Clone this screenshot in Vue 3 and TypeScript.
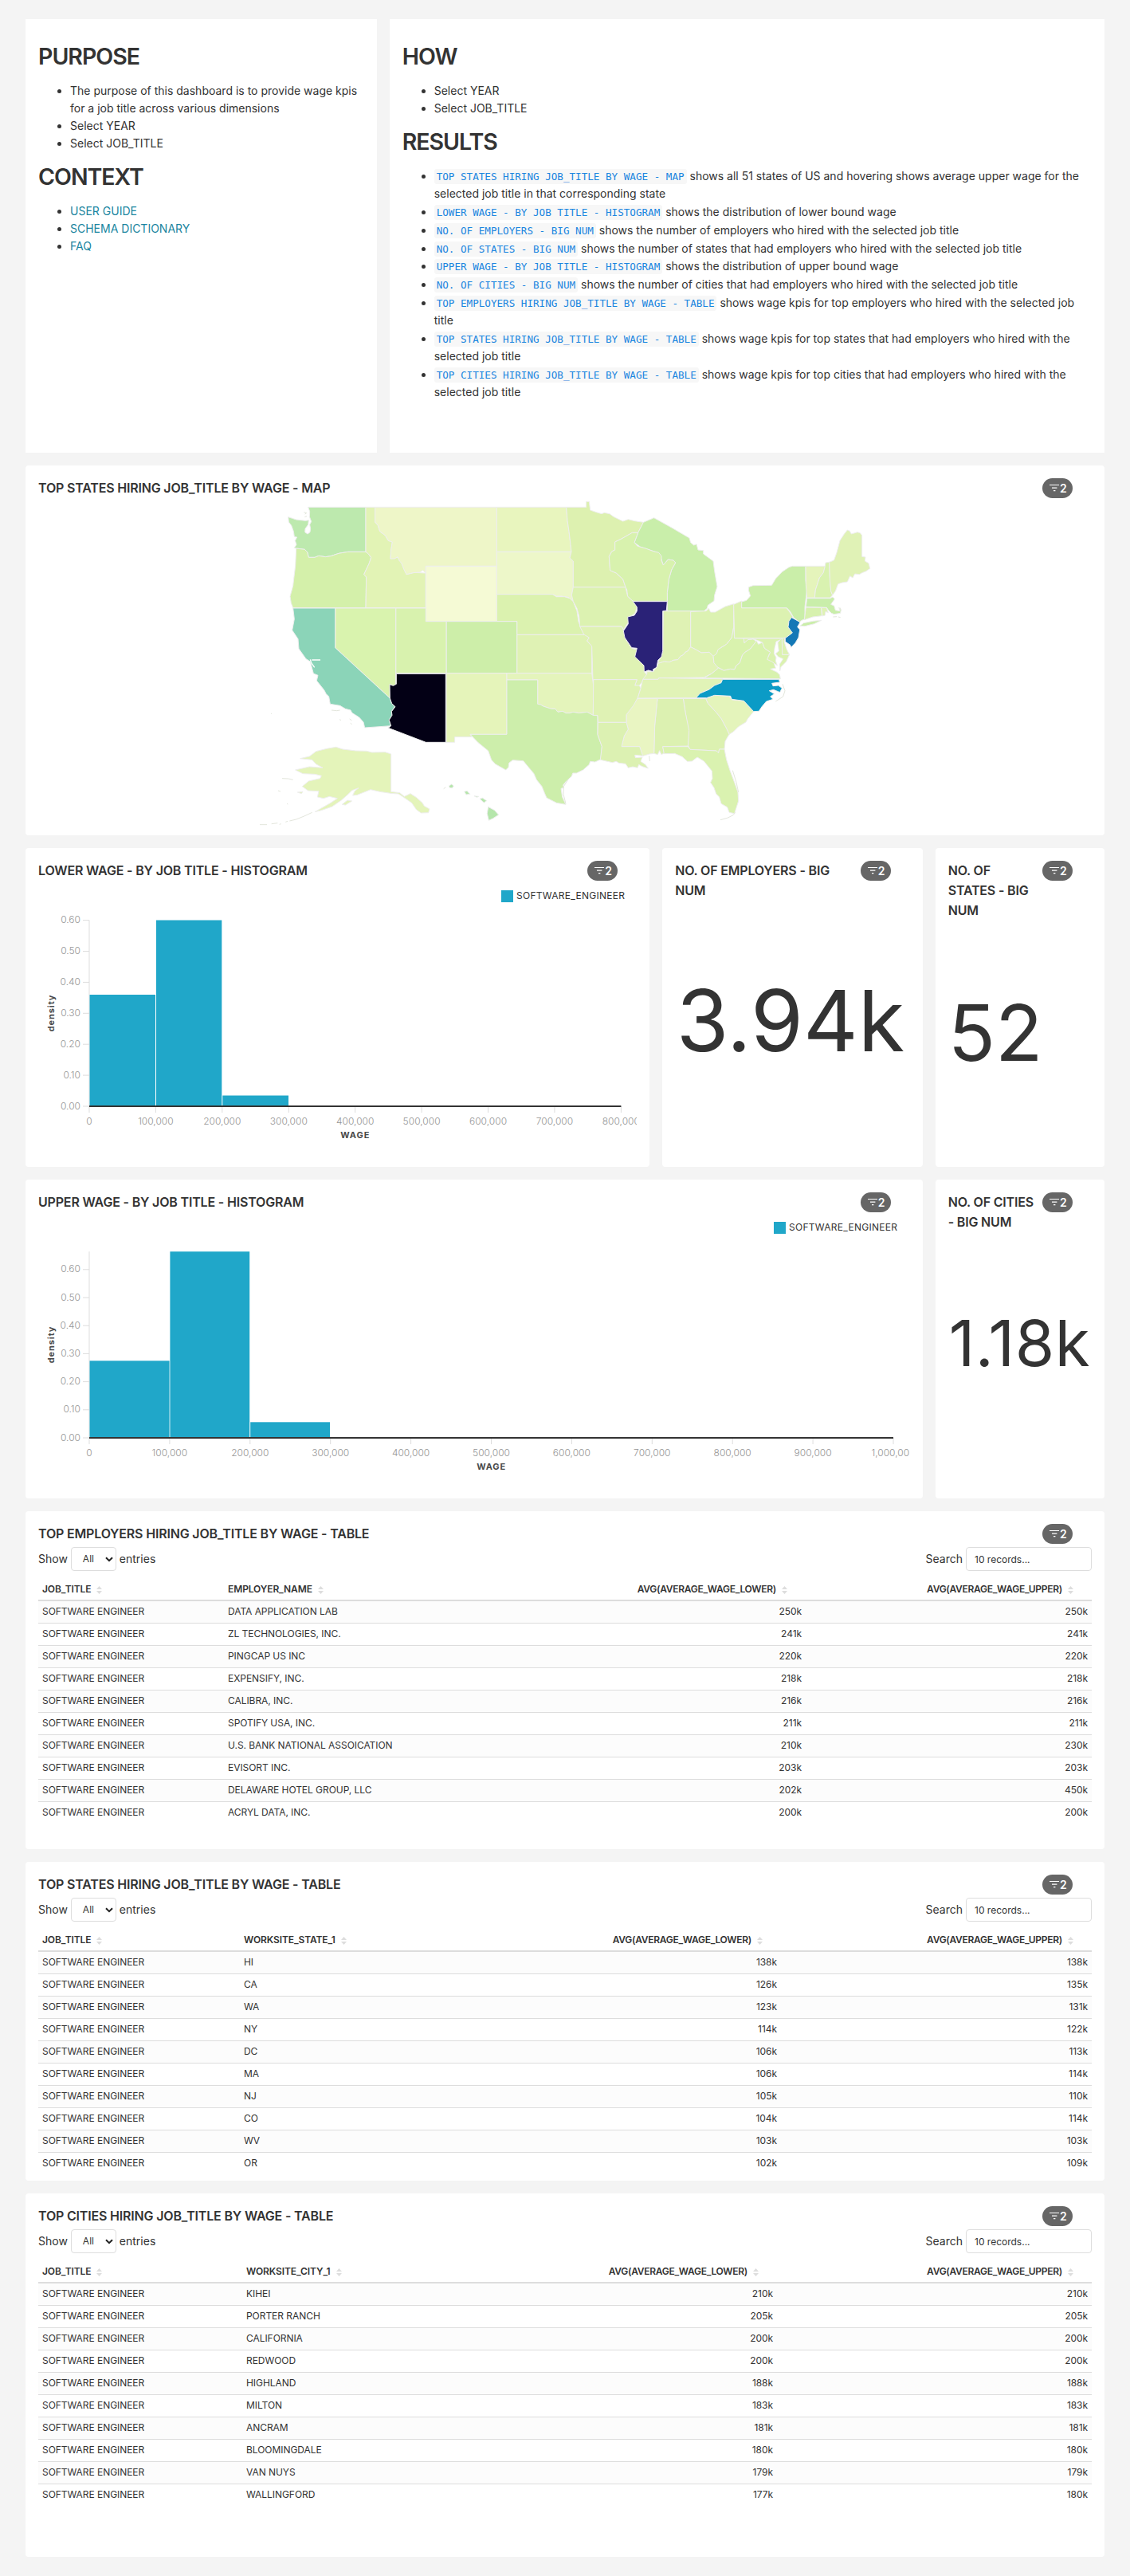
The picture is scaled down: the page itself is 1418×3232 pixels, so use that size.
<script setup lang="ts">
interface Shape { id: string; fill: string; d: string }
interface Bar { from: number; to: number; top: number }
interface Tick { at: number; label: string }
interface Histogram { id: string; width: number; legendX: number; center: number; end: number; top: number; bars: Bar[]; xTicks: Tick[]; yTicks: Tick[] }
interface WageTable { title: string; height: number; widths: number[]; columns: string[]; rows: string[][] }

const BASE = 276

const results: [string, string][] = [
  ['TOP STATES HIRING JOB_TITLE BY WAGE - MAP', 'shows all 51 states of US and hovering shows average upper wage for the selected job title in that corresponding state'],
  ['LOWER WAGE - BY JOB TITLE - HISTOGRAM', 'shows the distribution of lower bound wage'],
  ['NO. OF EMPLOYERS - BIG NUM', 'shows the number of employers who hired with the selected job title'],
  ['NO. OF STATES - BIG NUM', 'shows the number of states that had employers who hired with the selected job title'],
  ['UPPER WAGE - BY JOB TITLE - HISTOGRAM', 'shows the distribution of upper bound wage'],
  ['NO. OF CITIES - BIG NUM', 'shows the number of cities that had employers who hired with the selected job title'],
  ['TOP EMPLOYERS HIRING JOB_TITLE BY WAGE - TABLE', 'shows wage kpis for top employers who hired with the selected job title'],
  ['TOP STATES HIRING JOB_TITLE BY WAGE - TABLE', 'shows wage kpis for top states that had employers who hired with the selected job title'],
  ['TOP CITIES HIRING JOB_TITLE BY WAGE - TABLE', 'shows wage kpis for top cities that had employers who hired with the selected job title'],
]

const ticks = (count: number, step: number): Tick[] =>
  Array.from({ length: count + 1 }, (_, i) => ({ at: 64 + i * step, label: (i * 100000).toLocaleString('en-US') }))
const levels = (step: number): Tick[] =>
  Array.from({ length: 7 }, (_, i) => ({ at: BASE - i * step, label: (i / 10).toFixed(2) }))

const lower: Histogram = {
  id: 'lower', width: 751, legendX: 581, center: 397.8, end: 731.4, top: 42.5,
  bars: [{ from: 64.5, to: 147, top: 136 }, { from: 148, to: 230.3, top: 42.5 }, { from: 231.3, to: 314, top: 262.5 }],
  xTicks: ticks(8, 83.42), yTicks: levels(38.9),
}
const upper: Histogram = {
  id: 'upper', width: 1093, legendX: 923, center: 568.6, end: 1073, top: 42.3,
  bars: [{ from: 64.5, to: 164.6, top: 179.3 }, { from: 165.4, to: 265.2, top: 42.3 }, { from: 266.2, to: 366, top: 256.3 }],
  xTicks: ticks(10, 100.9), yTicks: levels(35.2),
}

const job = 'SOFTWARE ENGINEER'
const columnsFor = (name: string): string[] => ['JOB_TITLE', name, 'AVG(AVERAGE_WAGE_LOWER)', 'AVG(AVERAGE_WAGE_UPPER)']
const tables: WageTable[] = [
  {
    title: 'TOP EMPLOYERS HIRING JOB_TITLE BY WAGE - TABLE', height: 424, widths: [233, 367, 363, 359], columns: columnsFor('EMPLOYER_NAME'),
    rows: [
      [job, 'DATA APPLICATION LAB', '250k', '250k'], [job, 'ZL TECHNOLOGIES, INC.', '241k', '241k'],
      [job, 'PINGCAP US INC', '220k', '220k'], [job, 'EXPENSIFY, INC.', '218k', '218k'],
      [job, 'CALIBRA, INC.', '216k', '216k'], [job, 'SPOTIFY USA, INC.', '211k', '211k'],
      [job, 'U.S. BANK NATIONAL ASSOICATION', '210k', '230k'], [job, 'EVISORT INC.', '203k', '203k'],
      [job, 'DELAWARE HOTEL GROUP, LLC', '202k', '450k'], [job, 'ACRYL DATA, INC.', '200k', '200k'],
    ],
  },
  {
    title: 'TOP STATES HIRING JOB_TITLE BY WAGE - TABLE', height: 400, widths: [253, 287, 392, 390], columns: columnsFor('WORKSITE_STATE_1'),
    rows: [
      [job, 'HI', '138k', '138k'], [job, 'CA', '126k', '135k'], [job, 'WA', '123k', '131k'], [job, 'NY', '114k', '122k'],
      [job, 'DC', '106k', '113k'], [job, 'MA', '106k', '114k'], [job, 'NJ', '105k', '110k'], [job, 'CO', '104k', '114k'],
      [job, 'WV', '103k', '103k'], [job, 'OR', '102k', '109k'],
    ],
  },
  {
    title: 'TOP CITIES HIRING JOB_TITLE BY WAGE - TABLE', height: 456, widths: [256, 274, 397, 395], columns: columnsFor('WORKSITE_CITY_1'),
    rows: [
      [job, 'KIHEI', '210k', '210k'], [job, 'PORTER RANCH', '205k', '205k'], [job, 'CALIFORNIA', '200k', '200k'],
      [job, 'REDWOOD', '200k', '200k'], [job, 'HIGHLAND', '188k', '188k'], [job, 'MILTON', '183k', '183k'],
      [job, 'ANCRAM', '181k', '181k'], [job, 'BLOOMINGDALE', '180k', '180k'], [job, 'VAN NUYS', '179k', '179k'],
      [job, 'WALLINGFORD', '177k', '180k'],
    ],
  },
]

const states: Shape[] = [
  { id: 'WA', fill: '#bde9ae', d: 'M185,146L200,151 215,156 250,160 262,158 260,175 249,190 248,203 258,210 267,203 269,190 266,175 272,163 265,145 266,125 260,109 477,109 477,277 410,277 375,283 345,293 325,296 300,292 285,298 262,298 257,278 247,268 215,264 208,262 216,250 211,235 218,222 208,220 205,200 197,178 187,165Z' },
  { id: 'OR', fill: '#d4f0aa', d: 'M215,264L247,268 257,278 262,298 285,298 300,292 325,296 345,293 375,283 410,277 477,277 487,285 497,298 490,320 470,362 479,372 477,488 203,488 196,470 192,445 203,405 207,370 212,330Z' },
  { id: 'ID', fill: '#e2f3b5', d: 'M477,109L512,109 512,165 523,178 530,200 550,215 562,235 577,240 572,275 570,303 597,298 612,320 630,362 660,355 703,357 703,488 477,488 479,372 470,362 490,320 497,298 487,285 477,277Z' },
  { id: 'MT', fill: '#eef6c8', d: 'M512,109L970,109 970,331 703,331 703,357 692,347 680,354 655,356 630,362 620,342 612,320 604,312 597,296 585,303 570,303 572,270 577,240 562,235 550,215 530,200 523,178 512,165Z' },
  { id: 'WY', fill: '#f5fad5', d: 'M703,331H970V539H703Z' },
  { id: 'ND', fill: '#e8f5be', d: 'M970,109L1232,109 1236,160 1242,200 1248,250 1251,277 970,277Z' },
  { id: 'SD', fill: '#edf7c9', d: 'M970,277L1251,277 1245,300 1258,312 1258,410 1252,440 1258,464 1240,448 1215,444 1195,444 1180,437 970,437Z' },
  { id: 'NE', fill: '#dbf2af', d: 'M970,437L1180,437 1195,446 1225,446 1245,452 1258,464 1272,500 1278,540 1290,570 1302,589 1046,589 1046,539 970,539Z' },
  { id: 'KS', fill: '#dff2b4', d: 'M1046,589L1304,589 1318,600 1310,612 1328,632 1328,734 1046,734Z' },
  { id: 'CO', fill: '#cdeea9', d: 'M780,539H1046V734H780Z' },
  { id: 'UT', fill: '#d8f2ae', d: 'M590,489H703V539H780V734H590Z' },
  { id: 'NV', fill: '#d9f3ae', d: 'M362,489L590,489 590,778 580,781 568,776 568,828 362,638Z' },
  { id: 'NM', fill: '#e5f4ba', d: 'M780,734H1008V964H870L876,974H812V994H780Z' },
  { id: 'OK', fill: '#e4f4bb', d: 'M1008,734L1328,734 1334,780 1333,892 1310,880 1280,884 1257,880 1245,884 1230,884 1218,877 1200,880 1190,868 1175,868 1145,858 1135,852 1124,850 1124,759 1008,759Z' },
  { id: 'TX', fill: '#cdeeab', d: 'M1008,759L1124,759 1124,850 1135,852 1145,858 1175,868 1190,868 1200,880 1218,877 1230,884 1245,884 1257,880 1280,884 1310,880 1333,892 1350,893 1350,965 1366,1010 1362,1058 1340,1068 1322,1066 1318,1078 1295,1098 1270,1110 1256,1110 1252,1122 1232,1140 1220,1155 1222,1165 1212,1168 1217,1200 1230,1228 1195,1222 1158,1203 1150,1185 1140,1160 1120,1135 1110,1112 1090,1088 1070,1064 1030,1061 1016,1072 1014,1088 1004,1098 965,1076 950,1060 938,1026 900,995 870,964 1008,964Z' },
  { id: 'MN', fill: '#ddf1b0', d: 'M1232,109L1307,109 1307,88 1318,88 1322,120 1345,128 1365,134 1375,130 1395,134 1410,145 1420,150 1445,162 1465,155 1490,161 1522,166 1502,205 1480,205 1440,228 1415,240 1415,270 1403,276 1393,295 1397,347 1420,357 1445,380 1455,410 1258,410 1258,312 1245,300 1251,277 1248,250 1242,200 1236,160Z' },
  { id: 'MI', fill: '#c9eeaa', d: 'M1522,166L1562,149 1630,187 1695,225 1700,242 1712,252 1722,248 1728,270 1748,272 1748,285 1785,312 1790,350 1800,408 1790,440 1788,462 1765,478 1762,490 1750,500 1612,500 1612,430 1618,380 1628,345 1643,318 1635,309 1615,306 1597,327 1590,305 1580,282 1560,275 1510,258 1488,242 1502,205Z' },
  { id: 'WI', fill: '#d8f2ae', d: 'M1415,240L1440,228 1480,205 1502,205 1488,242 1500,256 1530,264 1560,275 1580,280 1590,293 1590,310 1597,327 1605,318 1615,306 1635,309 1643,318 1628,345 1618,380 1612,430 1612,463 1483,463 1463,445 1460,420 1455,410 1445,380 1420,357 1397,347 1393,295 1403,276 1415,270Z' },
  { id: 'IA', fill: '#dcf2b1', d: 'M1258,410L1455,410 1463,445 1483,463 1498,485 1490,510 1465,525 1467,540 1447,570 1440,558 1283,558 1280,520 1272,490 1258,464 1252,440Z' },
  { id: 'MO', fill: '#dff2b4', d: 'M1283,558L1440,558 1449,575 1452,600 1478,640 1498,645 1492,670 1525,705 1527,730 1535,740 1515,770 1505,782 1490,780 1498,758 1332,758 1328,632 1310,612 1318,600 1298,588Z' },
  { id: 'IN', fill: '#dff2b4', d: 'M1597,500L1700,500 1700,635 1690,650 1680,655 1672,665 1662,670 1652,683 1635,685 1620,692 1600,690 1578,697 1578,690 1590,670 1595,650Z' },
  { id: 'OH', fill: '#dcf2b2', d: 'M1700,502L1758,500 1768,490 1775,504 1792,504 1830,483 1862,473 1862,560 1855,600 1835,625 1810,640 1798,665 1785,670 1770,655 1740,657 1720,645 1700,635Z' },
  { id: 'KY', fill: '#e1f3b7', d: 'M1700,635L1720,645 1740,657 1770,655 1785,670 1788,695 1805,714 1780,735 1750,750 1580,752 1578,757 1520,757 1535,738 1535,728 1558,728 1572,712 1578,697 1600,690 1620,692 1635,685 1652,683 1662,670 1672,665 1680,655 1690,650Z' },
  { id: 'TN', fill: '#e1f3b7', d: 'M1520,757L1578,757 1580,752 1820,755 1815,770 1790,780 1770,795 1745,805 1722,827 1500,828 1512,790Z' },
  { id: 'WV', fill: '#d9f2ae', d: 'M1862,560L1865,602 1900,603 1902,620 1915,608 1935,605 1948,615 1925,642 1905,655 1895,665 1885,695 1872,705 1865,720 1850,718 1825,724 1800,710 1788,695 1785,670 1798,660 1803,645 1835,625 1855,600Z' },
  { id: 'VA', fill: '#d8f2ae', d: 'M1750,752L1780,735 1805,714 1825,724 1850,718 1865,720 1872,705 1885,695 1895,665 1905,655 1925,642 1948,612 1955,625 1970,618 1978,640 2000,655 1992,670 2012,692 2020,715 2000,718 2025,730 2035,740 2038,755Z' },
  { id: 'PA', fill: '#dcf2b1', d: 'M1862,475L1892,462 1892,488 2060,488 2070,500 2085,522 2068,545 2070,565 2083,580 2075,597 2050,602 1865,602Z' },
  { id: 'NY', fill: '#caeea9', d: 'M1892,465L1910,460 1925,443 1918,422 1918,410 1935,404 2005,403 2020,378 2045,352 2070,335 2083,331 2133,331 2133,385 2138,420 2130,485 2130,530 2118,535 2110,542 2088,525 2075,502 2062,488 1892,488Z M2112,556L2125,545 2160,538 2192,535 2165,548 2130,557Z' },
  { id: 'VT', fill: '#e5f4bb', d: 'M2133,331L2206,331 2200,355 2185,375 2170,420 2167,450 2138,450 2134,400Z' },
  { id: 'NH', fill: '#d9f2b0', d: 'M2206,331L2208,318 2222,316 2224,370 2228,425 2234,440 2225,450 2167,450 2170,420 2185,375 2200,355Z' },
  { id: 'ME', fill: '#e0f2b6', d: 'M2222,316L2232,312 2240,308 2250,280 2262,235 2278,210 2290,195 2298,198 2305,210 2328,203 2338,206 2345,215 2345,295 2358,297 2356,312 2370,320 2375,340 2360,350 2345,356 2335,362 2318,360 2310,375 2300,368 2290,390 2270,393 2255,398 2245,425 2234,440 2228,425 2224,380Z' },
  { id: 'MA', fill: '#c9eeaa', d: 'M2138,452L2225,452 2235,447 2242,455 2228,475 2240,480 2245,497 2262,500 2258,487 2266,495 2264,508 2240,512 2230,508 2218,496 2212,487 2134,484Z' },
  { id: 'CT', fill: '#d7f1ae', d: 'M2134,486L2192,487 2194,518 2160,522 2128,533Z' },
  { id: 'RI', fill: '#dff2b5', d: 'M2192,487L2212,488 2218,506 2208,502 2206,516 2196,519Z' },
  { id: 'MD', fill: '#dbf2b0', d: 'M1900,603L2044,603 2045,664 2072,664 2060,690 2040,710 2036,725 2035,700 2048,680 2030,672 2020,660 2032,650 2028,618 2038,608 2022,615 2016,640 2014,660 2022,675 2020,688 2026,705 2005,690 1988,682 2000,655 1978,640 1970,618 1950,610 1935,605 1915,608 1902,620Z' },
  { id: 'DE', fill: '#ddf2b2', d: 'M2044,603L2055,600 2052,615 2062,645 2072,664 2045,664Z' },
  { id: 'SC', fill: '#e4f4bb', d: 'M1757,830L1790,817 1845,820 1855,834 1900,838 1937,878 1915,905 1908,918 1880,935 1860,955 1845,964 1835,942 1815,905 1795,880 1765,848Z' },
  { id: 'GA', fill: '#dcf1b1', d: 'M1672,829L1757,830 1765,848 1795,880 1815,905 1835,942 1845,964 1830,990 1827,1020 1808,1020 1805,1034 1797,1026 1698,1021 1690,1005 1692,950 1680,880Z' },
  { id: 'AL', fill: '#dcf1b1', d: 'M1575,829L1672,829 1680,880 1694,950 1690,1008 1595,1010 1600,1035 1590,1040 1583,1025 1576,1040 1562,1036 1565,930Z' },
  { id: 'MS', fill: '#e9f5c2', d: 'M1500,829L1575,829 1565,930 1562,1036 1545,1038 1518,1046 1508,1010 1440,1010 1450,970 1465,945 1458,920 1458,890 1485,850Z' },
  { id: 'AR', fill: '#dff2b4', d: 'M1334,758L1498,758 1490,780 1507,780 1512,790 1500,828 1485,855 1458,890 1458,919 1351,919 1350,893 1333,892 1334,780Z' },
  { id: 'LA', fill: '#dcf1b2', d: 'M1351,919L1458,919 1465,945 1450,970 1440,1010 1508,1010 1520,1045 1490,1042 1492,1052 1518,1050 1512,1066 1530,1078 1540,1092 1518,1085 1505,1078 1500,1090 1482,1086 1465,1090 1455,1075 1430,1072 1420,1066 1405,1070 1360,1060 1366,1010 1350,965Z' },
  { id: 'FL', fill: '#daf2b0', d: 'M1595,1010L1690,1010 1698,1021 1797,1026 1805,1034 1808,1020 1827,1020 1835,1060 1848,1100 1865,1145 1878,1182 1880,1215 1872,1240 1865,1262 1845,1258 1838,1238 1815,1225 1808,1200 1796,1188 1788,1165 1775,1145 1782,1130 1780,1102 1750,1065 1725,1050 1705,1065 1688,1066 1668,1048 1640,1036 1600,1037Z' },
  { id: 'CA', fill: '#8bd4b8', d: 'M203,489L362,489 362,638 568,828 575,848 586,860 574,878 576,892 565,910 572,932 473,939 468,918 452,900 425,883 420,873 400,868 380,856 343,850 338,822 328,812 320,797 292,762 297,742 280,735 272,705 268,690 252,680 225,642 222,605 200,572 208,530Z' },
  { id: 'AZ', fill: '#030015', d: 'M592,736L778,736 778,994 703,994 562,940 572,932 565,910 576,892 574,878 588,860 575,848 568,828 567,776 580,781 592,775Z' },
  { id: 'IL', fill: '#2a2277', d: 'M1483,464L1612,464 1609,498 1595,500 1595,650 1590,672 1577,685 1572,712 1558,720 1560,728 1540,723 1525,729 1524,705 1490,672 1498,640 1478,638 1452,600 1447,575 1465,548 1463,522 1488,516 1498,500 1498,485Z' },
  { id: 'NJ', fill: '#1478b6', d: 'M2080,524L2112,542 2102,560 2111,570 2106,600 2094,620 2078,637 2075,628 2056,615 2056,602 2083,582 2067,560 2070,538Z' },
  { id: 'NC', fill: '#0b9bc6', d: 'M1820,757L2032,757 2036,768 2006,772 2010,782 2030,780 2044,790 2036,806 2012,796 1996,800 2015,812 2000,822 2010,832 1985,840 1968,860 1957,877 1937,878 1900,838 1855,832 1850,820 1790,817 1760,827 1720,827 1735,810 1770,795 1790,780 1815,770Z' },
  { id: 'HI', fill: '#b5e6ab', d: 'M790,1158L800,1152 808,1158 802,1166 793,1165Z M848,1180L858,1177 869,1189 855,1191Z M885,1196L903,1198 895,1201Z M906,1207L917,1204 932,1214 922,1221Z M938,1237L962,1250 977,1267 955,1281 940,1288 934,1262Z' },
  { id: 'AK', fill: '#e4f4ba', d: 'M230,1055L265,1047 290,1028 330,1018 365,1012 390,1020 440,1026 480,1027 500,1032 550,1031 572,1038 572,1180 605,1184 622,1198 645,1187 668,1202 690,1222 697,1234 717,1245 713,1259 685,1260 668,1248 650,1222 630,1208 600,1188 570,1186 530,1180 495,1172 470,1182 445,1192 428,1194 435,1178 450,1166 425,1175 410,1190 385,1212 350,1236 310,1250 285,1256 345,1222 370,1205 340,1198 318,1205 295,1200 300,1178 260,1176 238,1160 262,1140 305,1130 310,1120 285,1114 240,1112 212,1098 265,1086 315,1090 290,1076 275,1060Z M388,1228L408,1212 425,1215 400,1230Z M220,1182L240,1180 235,1187Z' },
]
</script>

<template>
  <main class="dashboard">
    <section class="row intro">
      <article class="card markdown span4">
        <h1>PURPOSE</h1>
        <ul>
          <li>The purpose of this dashboard is to provide wage kpis for a job title across various dimensions</li>
          <li>Select YEAR</li>
          <li>Select JOB_TITLE</li>
        </ul>
        <h1>CONTEXT</h1>
        <ul>
          <li><a>USER GUIDE</a></li>
          <li><a>SCHEMA DICTIONARY</a></li>
          <li><a>FAQ</a></li>
        </ul>
      </article>
      <article class="card markdown fill">
        <h1>HOW</h1>
        <ul>
          <li>Select YEAR</li>
          <li>Select JOB_TITLE</li>
        </ul>
        <h1>RESULTS</h1>
        <ul class="results">
          <li v-for="item in results" :key="item[0]"><code>{{ item[0] }}</code> {{ item[1] }}</li>
        </ul>
      </article>
    </section>

    <section class="card map-card">
      <header><h2>TOP STATES HIRING JOB_TITLE BY WAGE - MAP</h2>
        <span class="badge"><svg viewBox="0 0 13 11"><path d="M0 1.5h12M3 5.2h6.4M5 8.7h2.4" /></svg>2</span></header>
      <svg class="map" viewBox="-756 75 3966 1245">
        <path v-for="s in states" :key="s.id" :d="s.d" :fill="s.fill" />
        <path class="inlet" d="M306,684H274M268,682L272,695 284,712" />
        <g class="isles">
          <path d="M244,128l10,3 -6,4M247,146l8,-3M162,1130L185,1131 203,1135M147,1176L156,1179M120,886h3M348,873l20,2 12,-2M378,908l6,3M416,906l8,6M419,922l6,4" />
          <path d="M78,1304L105,1304M122,1301L145,1298M152,1303l6,-2M175,1294l8,-3M190,1290L215,1284 245,1272 275,1258M180,1225l4,2M770,1169l8,-6M1812,1286L1838,1279 1860,1268 1868,1258M1858,1100L1872,1145 1880,1182M2262,487L2266,498M2236,522l14,-1M2256,522l8,2M2046,775L2055,800 2048,822 2020,840M1230,1225L1221,1190 1222,1160 1240,1132M1544,1045l2,20" />
        </g>
      </svg>
    </section>

    <section class="row">
      <article class="card span7">
        <header><h2>LOWER WAGE - BY JOB TITLE - HISTOGRAM</h2>
          <span class="badge"><svg viewBox="0 0 13 11"><path d="M0 1.5h12M3 5.2h6.4M5 8.7h2.4" /></svg>2</span></header>
        <svg v-for="c in [lower]" :key="c.id" class="chart" :width="c.width" height="330">
          <rect class="bar" :x="c.legendX" y="5" width="15" height="15" />
          <text class="legend" :x="c.legendX + 19" y="16.2">SOFTWARE_ENGINEER</text>
          <path class="axis" :d="`M64 ${c.top}V276`" />
          <g v-for="t in c.yTicks" :key="t.label">
            <path class="axis" :d="`M56 ${t.at}h8`" />
            <text class="tick" x="53" :y="t.at + 3.5" text-anchor="end">{{ t.label }}</text>
          </g>
          <g v-for="t in c.xTicks" :key="t.label">
            <path class="axis" :d="`M${t.at} 276v8`" />
            <text class="tick" :x="t.at" y="299.3" text-anchor="middle">{{ t.label }}</text>
          </g>
          <rect v-for="b in c.bars" :key="b.from" class="bar" :x="b.from" :y="b.top" :width="b.to - b.from" :height="276 - b.top" />
          <path class="baseline" :d="`M64 276H${c.end}`" />
          <text class="axis-title" :x="c.center" y="316" text-anchor="middle">WAGE</text>
          <text class="axis-title" transform="translate(19.5 159) rotate(-90)" text-anchor="middle">density</text>
        </svg>
      </article>
      <article class="card span3">
        <header><h2>NO. OF EMPLOYERS - BIG NUM</h2>
          <span class="badge"><svg viewBox="0 0 13 11"><path d="M0 1.5h12M3 5.2h6.4M5 8.7h2.4" /></svg>2</span></header>
        <div class="number employers">3.94k</div>
      </article>
      <article class="card span2">
        <header><h2>NO. OF STATES - BIG NUM</h2>
          <span class="badge"><svg viewBox="0 0 13 11"><path d="M0 1.5h12M3 5.2h6.4M5 8.7h2.4" /></svg>2</span></header>
        <div class="number states">52</div>
      </article>
    </section>

    <section class="row">
      <article class="card fill">
        <header><h2>UPPER WAGE - BY JOB TITLE - HISTOGRAM</h2>
          <span class="badge"><svg viewBox="0 0 13 11"><path d="M0 1.5h12M3 5.2h6.4M5 8.7h2.4" /></svg>2</span></header>
        <svg v-for="c in [upper]" :key="c.id" class="chart" :width="c.width" height="330">
          <rect class="bar" :x="c.legendX" y="5" width="15" height="15" />
          <text class="legend" :x="c.legendX + 19" y="16.2">SOFTWARE_ENGINEER</text>
          <path class="axis" :d="`M64 ${c.top}V276`" />
          <g v-for="t in c.yTicks" :key="t.label">
            <path class="axis" :d="`M56 ${t.at}h8`" />
            <text class="tick" x="53" :y="t.at + 3.5" text-anchor="end">{{ t.label }}</text>
          </g>
          <g v-for="t in c.xTicks" :key="t.label">
            <path class="axis" :d="`M${t.at} 276v8`" />
            <text class="tick" :x="t.at" y="299.3" text-anchor="middle">{{ t.label }}</text>
          </g>
          <rect v-for="b in c.bars" :key="b.from" class="bar" :x="b.from" :y="b.top" :width="b.to - b.from" :height="276 - b.top" />
          <path class="baseline" :d="`M64 276H${c.end}`" />
          <text class="axis-title" :x="c.center" y="316" text-anchor="middle">WAGE</text>
          <text class="axis-title" transform="translate(19.5 159) rotate(-90)" text-anchor="middle">density</text>
        </svg>
      </article>
      <article class="card span2">
        <header><h2>NO. OF CITIES - BIG NUM</h2>
          <span class="badge"><svg viewBox="0 0 13 11"><path d="M0 1.5h12M3 5.2h6.4M5 8.7h2.4" /></svg>2</span></header>
        <div class="number cities">1.18k</div>
      </article>
    </section>

    <section v-for="t in tables" :key="t.title" class="card table-card" :style="{ height: t.height + 'px' }">
      <header><h2>{{ t.title }}</h2>
        <span class="badge"><svg viewBox="0 0 13 11"><path d="M0 1.5h12M3 5.2h6.4M5 8.7h2.4" /></svg>2</span></header>
      <div class="controls">
        <span>Show</span>
        <span class="select">All<svg viewBox="0 0 10 7"><path d="M1 1.2l4 4 4-4" /></svg></span>
        <span>entries</span>
        <span class="search">Search</span>
        <span class="input">10 records...</span>
      </div>
      <table>
        <colgroup><col v-for="(w, i) in t.widths" :key="i" :style="{ width: w + 'px' }" /></colgroup>
        <thead>
          <tr>
            <th v-for="(c, i) in t.columns" :key="c" :class="{ num: i > 1 }">{{ c }}<svg viewBox="0 0 7 10"><path d="M0 4L3.5 0 7 4ZM0 6L3.5 10 7 6Z" /></svg></th>
          </tr>
        </thead>
        <tbody>
          <tr v-for="r in t.rows" :key="r[1]">
            <td v-for="(v, i) in r" :key="i" :class="{ num: i > 1 }">{{ v }}</td>
          </tr>
        </tbody>
      </table>
    </section>
  </main>
</template>

<style>
body { background: #f4f4f4; }
</style>

<style scoped>
* { box-sizing: border-box; }
.dashboard {
  width: 1418px; height: 3232px; padding: 24px 32px; background: #f4f4f4; color: #333;
  display: flex; flex-direction: column; gap: 16px;
  font: 14px/22px Inter, "Liberation Sans", sans-serif;
}
.row { display: flex; gap: 16px; height: 400px; flex: none; }
.row.intro { height: 544px; }
.card { background: #fff; border-radius: 4px; padding: 16px; overflow: hidden; flex: none; }
.span2 { width: 212.3px; }
.span3 { width: 326.5px; }
.span4 { width: 440.7px; }
.span7 { width: 783.2px; }
.fill { flex: 1; }
.markdown { padding: 30px 16px; border-radius: 0; }
h1 { margin: 0 0 15px; font-size: 28.5px; line-height: 34px; font-weight: 600; letter-spacing: -1px; }
ul { margin: 0 0 14px; padding-left: 40px; }
a { color: #1a85a0; }
code {
  font: 12.6px/16px "DejaVu Sans Mono", monospace; color: #1a85e0; background: #f7f7f7;
  border-radius: 3px; padding: 2px 3px;
}
.results li { margin-bottom: .85px; }
.map-card { height: 464px; }
header { display: flex; justify-content: space-between; align-items: flex-start; gap: 6px; padding-right: 24px; }
h2 { margin: 0; font-size: 16px; line-height: 25px; font-weight: 600; letter-spacing: -.18px; }
.span2 h2 { width: 112px; flex: none; margin-right: -6px; }
.span3 h2 { width: 215px; }
.badge {
  width: 38px; height: 25px; flex: none; border-radius: 12.5px; background: #666; color: #fff;
  font-size: 14px; font-weight: 600; line-height: 23px; padding-left: 9px; display: flex; align-items: center;
}
.badge svg { width: 13px; height: 11px; margin-top: -1px; flex: none; }
.badge path { stroke: #fff; stroke-width: 1.2; fill: none; }
.map { display: block; width: 1322px; height: 415px; }
.map path { stroke: #eee; stroke-width: 3; stroke-linejoin: round; }
.map .inlet { stroke: #fff; stroke-width: 4; fill: none; }
.map .isles path { stroke: #e3e6dc; fill: none; }
.chart { display: block; margin-top: 7px; }
.bar { fill: #20a7c9; }
.axis { stroke: #ddd; fill: none; }
.baseline { stroke: #333; stroke-width: 2; }
.legend { font-size: 12px; fill: #333; letter-spacing: .28px; }
.tick { font-size: 12px; font-weight: 300; fill: #969696; }
.axis-title { font-size: 11px; font-weight: 700; letter-spacing: .9px; fill: #484848; }
.number { white-space: nowrap; line-height: 1; }
.employers { font-size: 106.5px; margin: 98px 0 0 1.5px; }
.states { font-size: 97.6px; margin: 92px 0 0 0; }
.cities { font-size: 80px; margin: 99px 0 0 1px; letter-spacing: .6px; }
.controls { display: flex; height: 30px; margin-top: 4px; line-height: 29px; }
.select {
  width: 57px; height: 30px; border: 1px solid #ddd; border-radius: 4px; margin: 0 4px 0 4px;
  padding-left: 14px; font-size: 12px; line-height: 30px; display: flex; align-items: center;
}
.select svg { width: 10px; height: 7px; margin-left: 14px; }
.select path { fill: none; stroke: #222; stroke-width: 2; }
.search { margin-left: auto; }
.input { width: 158px; height: 30px; border: 1px solid #ddd; border-radius: 4px; margin-left: 4px; padding-left: 10px; font-size: 12px; line-height: 30px; }
table { width: 1322px; table-layout: fixed; border-collapse: separate; border-spacing: 0; margin-top: 9px; font-size: 12px; line-height: 17px; letter-spacing: -.05px; }
th { height: 29px; padding: 4px 5px 4px; text-align: left; font-weight: 600; letter-spacing: -.1px; border-bottom: 2px solid #ddd; white-space: nowrap; }
th svg { width: 7px; height: 10px; margin-left: 7px; vertical-align: -2px; fill: #ddd; }
th.num { text-align: right; padding-right: 23px; letter-spacing: -.28px; }
td { height: 28px; padding: 4px 5px 6px; vertical-align: top; border-bottom: 1px solid #ddd; white-space: nowrap; }
td.num { text-align: right; }
tbody tr:nth-child(odd) { background: #fcfcfc; }
tbody tr:last-child td { border-bottom: 0; }
</style>
